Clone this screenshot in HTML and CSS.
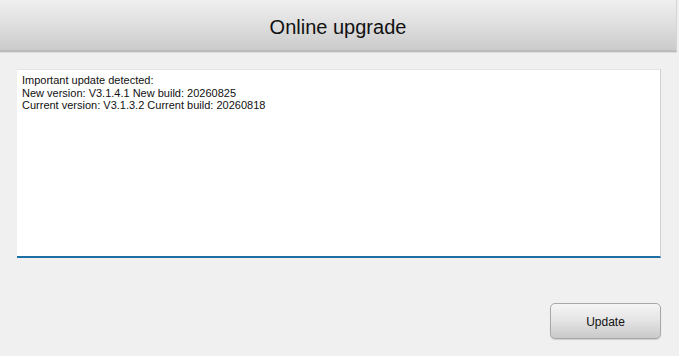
FILE: index.html
```html
<!DOCTYPE html>
<html lang="en">
<head>
  <meta charset="UTF-8" />
  <title>Online upgrade</title>
  <link rel="stylesheet" href="styles.css">
</head>
<body>
  <div class="header">
    <h1>Online upgrade</h1>
  </div>
  <div class="content">
    <div class="log">
      <p>Important update detected:</p>
      <p>New version: V3.1.4.1 New build: 20260825</p>
      <p>Current version: V3.1.3.2 Current build: 20260818</p>
    </div>
    <div class="actions">
      <button class="btn" type="button">Update</button>
    </div>
  </div>
</body>
</html>
```

FILE: styles.css
```css
body {
  margin: 0;
  font-family: 'Liberation Sans', Arial, sans-serif;
  background-color: #f0f0f0;
  width: 679px;
  height: 356px;
  overflow: hidden;
}

.header {
  height: 50px;
  margin-right: 2px;
  border-right: 1px solid #d6d6d6;
  border-bottom: 2px solid #bdbdbd;
  box-shadow: 0 1px 0 #dcdcdc;
  background: linear-gradient(to bottom, #efefef 0%, #e2e2e2 40%, #cbcbcb 100%);
  display: flex;
  align-items: center;
  justify-content: center;
}

.header h1 {
  margin: 0;
  font-size: 20px;
  font-weight: normal;
  color: #111;
  padding-top: 4px;
}

.content {
  padding: 17px 18px 0 17px;
}

.log {
  height: 180px;
  background-color: white;
  border-top: 1px solid #e4e4e4;
  border-right: 1px solid #d0d0d0;
  border-bottom: 2px solid #1d6fa3;
  padding: 4px 5px 2px;
  font-size: 11px;
  line-height: 12.5px;
  color: #111;
}

.log p {
  margin: 0;
}

.actions {
  display: flex;
  justify-content: flex-end;
  margin-top: 45px;
}

.btn {
  width: 111px;
  height: 36px;
  border: 1px solid #a8a8a8;
  border-radius: 5px;
  background: linear-gradient(to bottom, #f5f5f5 0%, #e6e6e6 45%, #c9c9c9 100%);
  font-family: 'Liberation Sans', Arial, sans-serif;
  font-size: 12px;
  color: #111;
  padding-top: 2px;
  box-shadow: 0 1px 1px rgba(0, 0, 0, 0.15);
  cursor: pointer;
}
```
